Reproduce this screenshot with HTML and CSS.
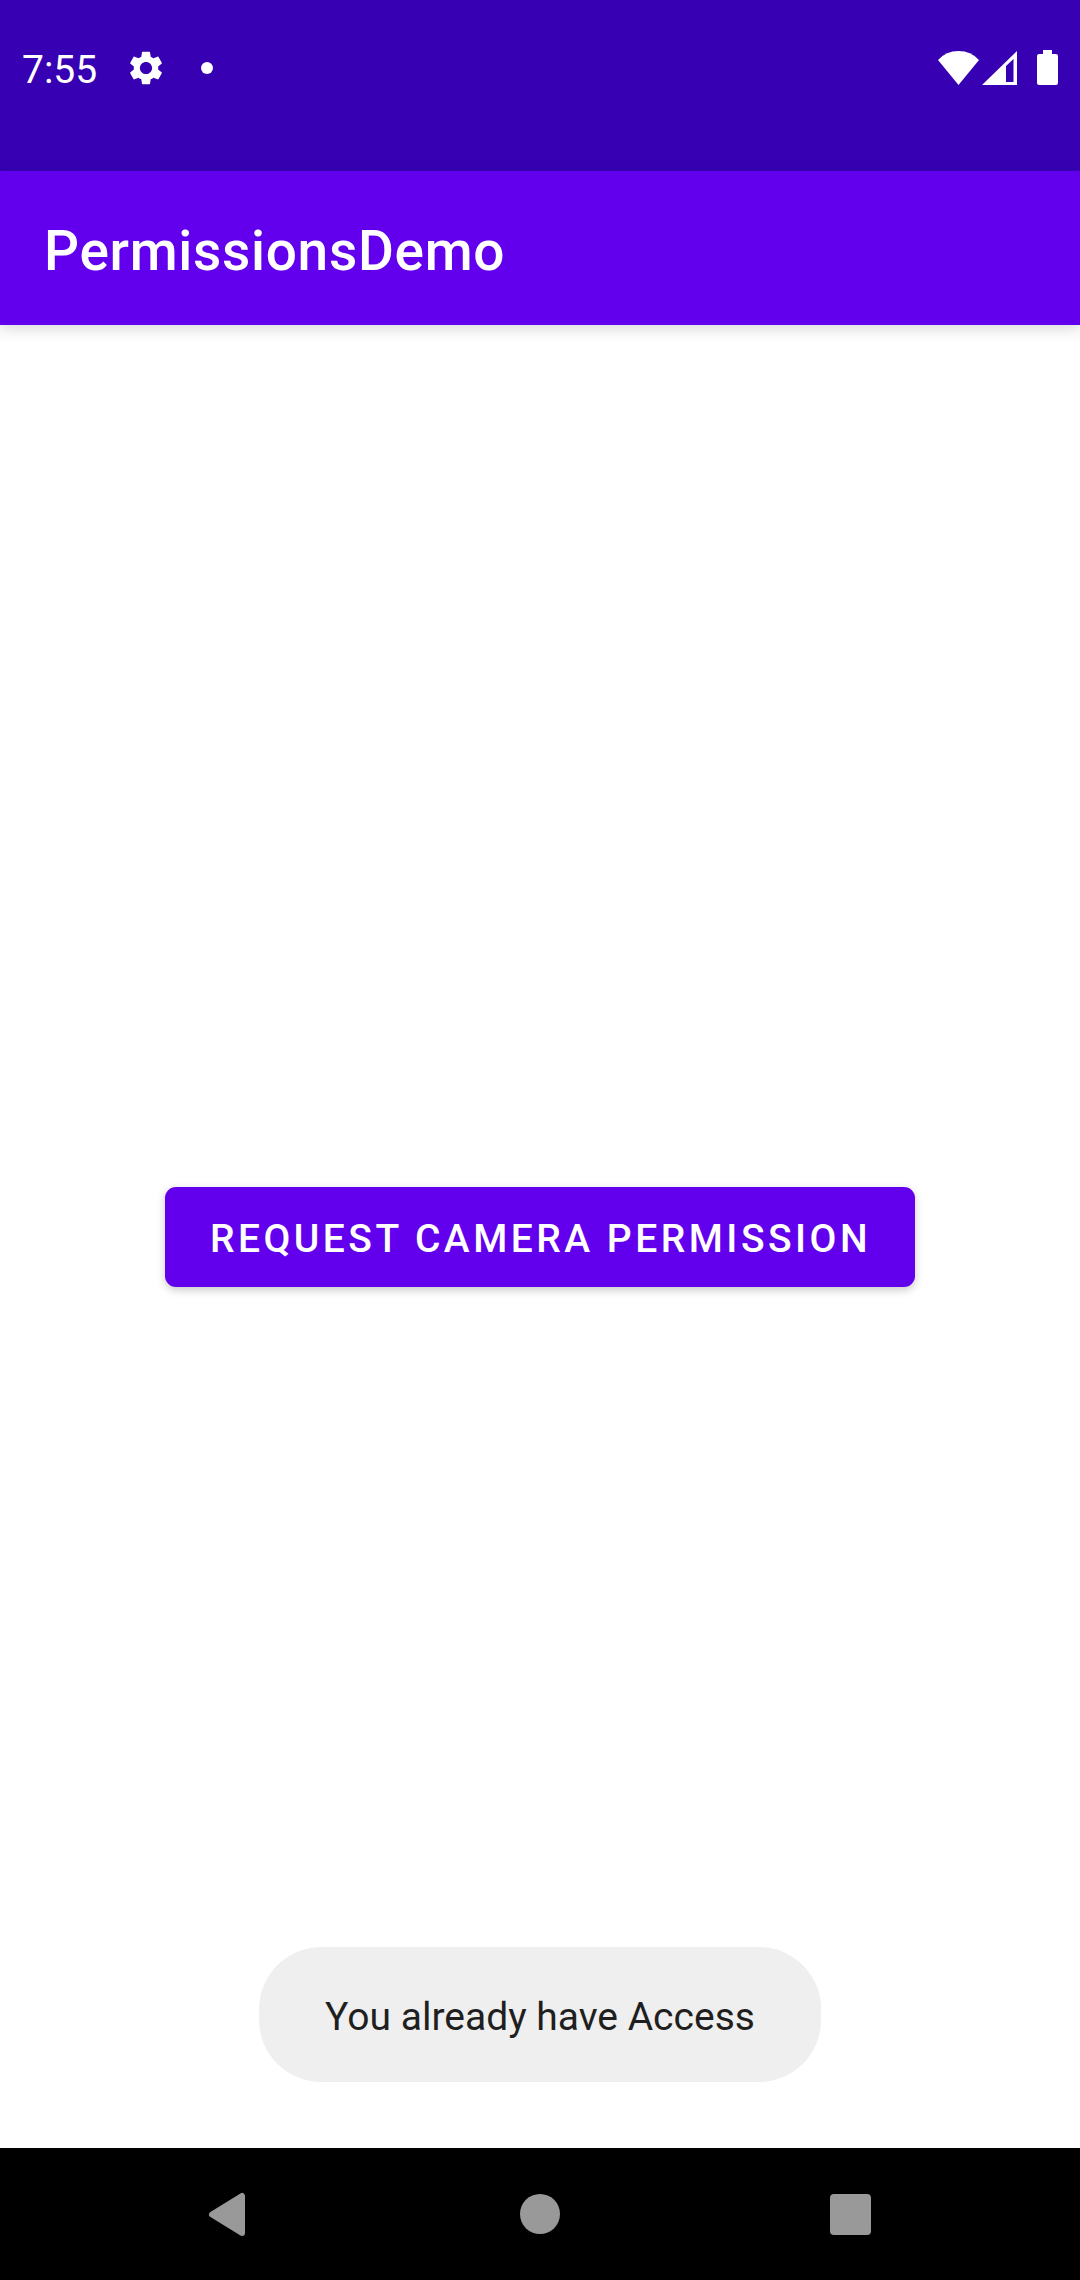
FILE: index.html
```html
<!DOCTYPE html>
<html lang="en">
<head>
<meta charset="utf-8">
<meta name="viewport" content="width=device-width, initial-scale=1">
<title>PermissionsDemo</title>
<link rel="stylesheet" href="styles.css">
</head>
<body>
<div class="screen">
  <div class="status-bar">
    <div class="status-left">
      <time class="clock">7:55</time>
      <svg class="gear" viewBox="2 2 20 20" aria-hidden="true"><path d="M19.14 12.94c.04-.3.06-.61.06-.94 0-.32-.02-.64-.07-.94l2.03-1.58c.18-.14.23-.41.12-.61l-1.92-3.32c-.12-.22-.37-.29-.59-.22l-2.39.96c-.5-.38-1.03-.7-1.62-.94l-.36-2.54c-.04-.24-.24-.41-.48-.41h-3.84c-.24 0-.43.17-.47.41l-.36 2.54c-.59.24-1.13.57-1.62.94l-2.39-.96c-.22-.08-.47 0-.59.22L2.74 8.87c-.12.21-.08.47.12.61l2.03 1.58c-.05.3-.09.63-.09.94s.02.64.07.94l-2.03 1.58c-.18.14-.23.41-.12.61l1.92 3.32c.12.22.37.29.59.22l2.39-.96c.5.38 1.03.7 1.62.94l.36 2.54c.05.24.24.41.48.41h3.84c.24 0 .44-.17.47-.41l.36-2.54c.59-.24 1.13-.56 1.62-.94l2.39.96c.22.08.47 0 .59-.22l1.92-3.32c.12-.22.07-.47-.12-.61l-2.01-1.58zM12 15.6c-1.98 0-3.6-1.62-3.6-3.6s1.62-3.6 3.6-3.6 3.6 1.62 3.6 3.6-1.62 3.6-3.6 3.6z"/></svg>
      <span class="dot"></span>
    </div>
    <div class="status-right">
      <svg class="wifi" viewBox="0 0 41 36" aria-hidden="true"><path d="M0 10Q8 1 20.500 1T41 10L20.500 35Z"/></svg>
      <svg class="signal" viewBox="0 0 35 36" aria-hidden="true"><path fill-rule="evenodd" d="M0 35L35 1V35ZM24 16V32H31.500V9Z"/></svg>
      <svg class="battery" viewBox="0 0 21 36" aria-hidden="true"><path d="M6 0H15V4H19Q21 4 21 6V33Q21 35 19 35H2Q0 35 0 33V6Q0 4 2 4H6Z"/></svg>
    </div>
  </div>
  <header class="app-bar"><h1 class="title">PermissionsDemo</h1></header>
  <main class="content">
    <button class="request" type="button">Request camera permission</button>
    <div class="toast" role="status">You already have Access</div>
  </main>
  <nav class="nav-bar" aria-label="System navigation">
    <button class="nav-button" type="button" aria-label="Back"><svg class="nav-icon" viewBox="0 0 48 48"><path d="M38 5V42L8 23.500Z" transform="translate(0 1)" class="triangle"/></svg></button>
    <button class="nav-button" type="button" aria-label="Home"><svg class="nav-icon" viewBox="0 0 48 48"><circle cx="24" cy="24" r="20"/></svg></button>
    <button class="nav-button" type="button" aria-label="Recent apps"><svg class="nav-icon" viewBox="0 0 48 48"><rect x="2" y="4" width="41" height="41" rx="4"/></svg></button>
  </nav>
</div>
</body>
</html>
```
FILE: styles.css
```css
* {
  box-sizing: border-box;
}

body {
  margin: 0;
  font-family: Roboto, "Liberation Sans", sans-serif;
  background: #fff;
}

.screen {
  display: flex;
  flex-direction: column;
  min-height: 100vh;
}

.status-bar {
  display: flex;
  justify-content: space-between;
  align-items: center;
  padding: 43px 22px 78px;
  background: #3700b3;
  color: #fff;
  fill: #fff;
}

.status-left,
.status-right {
  display: flex;
  align-items: center;
  height: 50px;
}

.clock {
  padding-top: 4px;
  font-size: 39px;
  line-height: 46px;
}

.gear {
  width: 34px;
  height: 34px;
  margin-left: 32px;
}

.dot {
  width: 12px;
  height: 12px;
  margin-left: 38px;
  border-radius: 50%;
  background: #fff;
}

.wifi {
  width: 41px;
  height: 36px;
}

.signal {
  width: 35px;
  height: 36px;
  margin-left: 3px;
}

.battery {
  width: 21px;
  height: 36px;
  margin-left: 20px;
}

.app-bar {
  display: flex;
  align-items: center;
  height: 154px;
  padding: 6px 44px 0;
  background: #6200ee;
  color: #fff;
  box-shadow: 0 4px 14px rgba(0, 0, 0, 0.15);
}

.title {
  margin: 0;
  font-size: 55px;
  font-weight: 500;
  line-height: 64px;
  letter-spacing: 0.0125em;
}

.content {
  position: relative;
  display: flex;
  flex: 1;
  align-items: center;
  justify-content: center;
}

.request {
  padding: 29px 44px 25px 45px;
  border: 0;
  border-radius: 11px;
  background: #6200ee;
  color: #fff;
  font-family: inherit;
  font-size: 39px;
  font-weight: 500;
  line-height: 46px;
  letter-spacing: 0.0893em;
  text-transform: uppercase;
  box-shadow: 0 3px 8px rgba(0, 0, 0, 0.22);
}

.toast {
  position: absolute;
  bottom: 66px;
  left: 50%;
  transform: translateX(-50%);
  padding: 47px 66px 42px;
  border-radius: 62px;
  background: #efefef;
  color: #1f1f1f;
  font-size: 39px;
  line-height: 46px;
  white-space: nowrap;
}

.nav-bar {
  display: flex;
  height: 132px;
  padding: 0 72px;
  background: #000;
}

.nav-button {
  display: flex;
  flex: 1;
  align-items: center;
  justify-content: center;
  padding: 0;
  border: 0;
  background: none;
}

.nav-icon {
  width: 48px;
  height: 48px;
  fill: #999;
}

.triangle {
  stroke: #999;
  stroke-width: 6px;
  stroke-linejoin: round;
}
```
